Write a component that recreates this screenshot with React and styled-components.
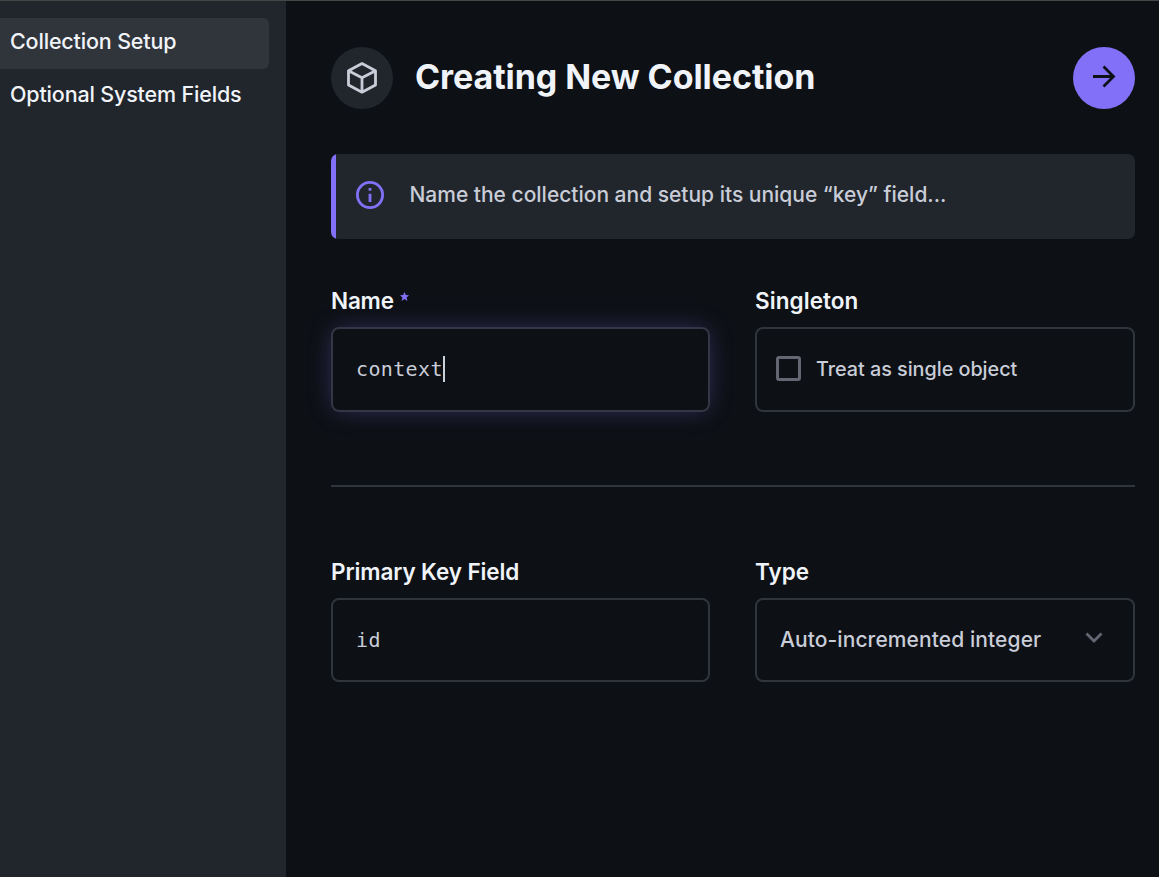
import React from "react";
import styled, { createGlobalStyle } from "styled-components";

const GlobalStyle = createGlobalStyle`
  * { box-sizing: border-box; }
  body { margin: 0; background: #0d1015; font-family: Inter, sans-serif; }
`;

const Page = styled.div`
  display: flex;
  width: 100%;
  height: 100vh;
  border-top: 1px solid #434746;
  overflow: hidden;
`;

const Sidebar = styled.nav`
  flex: 0 0 286px;
  display: flex;
  flex-direction: column;
  gap: 2px;
  padding: 17px 17px 0 0;
  background: #21252c;
`;

const NavItem = styled.a`
  height: 51px;
  padding-left: 10px;
  line-height: 47px;
  border-radius: 0 6px 6px 0;
  color: #f0f4f9;
  font-size: 21.5px;
  font-weight: 500;
  letter-spacing: -0.17px;
  white-space: nowrap;
  background: ${(p) => (p.$active ? "#30343b" : "transparent")};
`;

const Main = styled.main`
  flex: 1;
  padding: 46px 24px 0 45px;
`;

const Header = styled.header`
  display: flex;
  align-items: center;
  height: 62px;
`;

const Round = styled.div`
  flex: none;
  display: grid;
  place-items: center;
  width: 62px;
  height: 62px;
  border-radius: 50%;
  color: ${(p) => (p.$primary ? "#0d1015" : "#c9cdd8")};
  background: ${(p) => (p.$primary ? "#8370f8" : "#21252c")};
`;

const Title = styled.h1`
  flex: 1;
  margin: 0 0 0 22px;
  color: #f0f4f9;
  font-size: 34px;
  line-height: 60px;
  padding-bottom: 2px;
  font-weight: 700;
  letter-spacing: -0.07px;
  white-space: nowrap;
`;

const Notice = styled.div`
  display: flex;
  align-items: center;
  height: 85px;
  margin-top: 45px;
  padding: 0 20px 3px 20px;
  border-radius: 7px;
  color: #c9cdd8;
  font-size: 21px;
  font-weight: 450;
  letter-spacing: -0.01px;
  background: linear-gradient(to right, #8370f8 5px, #21252c 5px);
  svg { margin: 0 25.5px 0 5px; flex: none; }
  span { padding-bottom: 1px; }
`;

const Fields = styled.section`
  display: grid;
  grid-template-columns: 379px 380px;
  column-gap: 45px;
  margin-top: ${(p) => p.$top}px;
`;

const Label = styled.label`
  display: flex;
  height: 41px;
  line-height: 30px;
  color: #f0f4f9;
  font-size: 22.5px;
  font-weight: 600;
  letter-spacing: ${(p) => p.$tracking || 0}px;
  svg { margin: 6px 0 0 6px; }
`;

const Control = styled.div`
  display: flex;
  align-items: center;
  height: ${(p) => p.$height || 85}px;
  padding: 0 23px 1px;
  border: 2px solid ${(p) => (p.$focused ? "#353545" : "#30343b")};
  border-radius: 8px;
  color: #c9cdd8;
  font-size: 21px;
  font-weight: 450;
  white-space: nowrap;
  box-shadow: ${(p) => (p.$focused ? "0 0 26px -4px rgba(131, 112, 248, 0.38)" : "none")};
`;

const Mono = styled.span`
  font-family: "DejaVu Sans Mono", monospace;
  font-size: 20px;
  letter-spacing: 0.36px;
`;

const Caret = styled.span`
  width: 2px;
  height: 26px;
  background: #c9d1d9;
`;

const CheckboxControl = styled(Control)`
  padding: 0 18px 2px 19px;
  font-size: 19.8px;
  letter-spacing: -0.03px;
`;

const Checkbox = styled.span`
  width: 25px;
  height: 25px;
  margin: 0 15px 1px 0;
  border: 3px solid #666672;
  border-radius: 3px;
`;

const SelectControl = styled(Control)`
  justify-content: space-between;
  padding: 0 30px 2px 23px;
  letter-spacing: 0.09px;
`;

const Divider = styled.hr`
  height: 2px;
  margin: 73px 0 0;
  border: 0;
  background: #30343b;
`;

const BoxIcon = () => (
  <svg width="32" height="34" viewBox="0 0 32 34" fill="none" stroke="currentColor" strokeWidth="2.8" strokeLinejoin="round">
    <path d="M16 2.6 29.5 9.7V24L16 31.2 2.5 24V9.7ZM2.5 9.7 16 16.8 29.5 9.7M16 16.8V31" />
  </svg>
);

const ArrowIcon = () => (
  <svg width="24" height="26" viewBox="0 0 24 26" fill="none" stroke="currentColor" strokeWidth="2.8">
    <path d="M1 11.5H21M11.5 1.5 21.5 11.5 11.5 21.5" />
  </svg>
);

const InfoIcon = () => (
  <svg width="28" height="28" viewBox="0 0 28 28" fill="none" stroke="#8370f8" strokeWidth="2.8">
    <circle cx="14" cy="14" r="12.6" />
    <path d="M14 12.8V21M14 7V9.8" />
  </svg>
);

const StarIcon = () => (
  <svg width="9" height="9" viewBox="0 0 9 9" fill="#8370f8">
    <path d="M4.5 0 5.8 3.1 9 3.3 6.6 5.5 7.4 9 4.5 7.1 1.6 9 2.4 5.5 0 3.3 3.2 3.1Z" />
  </svg>
);

const ChevronIcon = () => (
  <svg width="18" height="16" viewBox="0 0 18 16" fill="none" stroke="#666672" strokeWidth="2.8">
    <path d="M1.5 2.5 9 10 16.5 2.5" />
  </svg>
);

export default function App() {
  return (
    <>
      <GlobalStyle />
      <Page>
        <Sidebar>
          <NavItem $active>Collection Setup</NavItem>
          <NavItem>Optional System Fields</NavItem>
        </Sidebar>
        <Main>
          <Header>
            <Round><BoxIcon /></Round>
            <Title>Creating New Collection</Title>
            <Round $primary><ArrowIcon /></Round>
          </Header>
          <Notice>
            <InfoIcon />
            <span>Name the collection and setup its unique “key” field...</span>
          </Notice>
          <Fields $top={47}>
            <div>
              <Label $tracking={-0.2}>Name <StarIcon /></Label>
              <Control $focused>
                <Mono>context</Mono>
                <Caret />
              </Control>
            </div>
            <div>
              <Label $tracking={0.08}>Singleton</Label>
              <CheckboxControl>
                <Checkbox />
                <span>Treat as single object</span>
              </CheckboxControl>
            </div>
          </Fields>
          <Divider />
          <Fields $top={70}>
            <div>
              <Label $tracking={-0.1}>Primary Key Field</Label>
              <Control $height={84}><Mono>id</Mono></Control>
            </div>
            <div>
              <Label>Type</Label>
              <SelectControl $height={84}>
                <span>Auto-incremented integer</span>
                <ChevronIcon />
              </SelectControl>
            </div>
          </Fields>
        </Main>
      </Page>
    </>
  );
}
